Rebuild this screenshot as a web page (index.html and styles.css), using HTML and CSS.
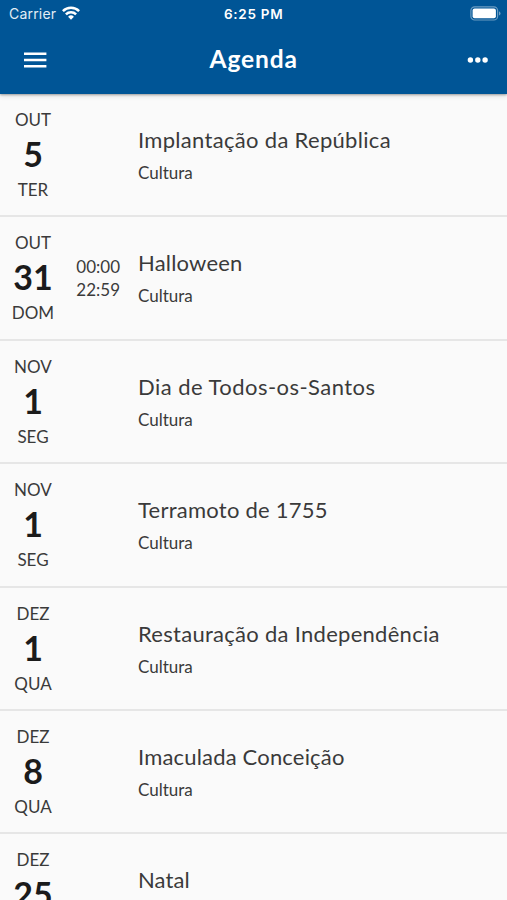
FILE: index.html
```html
<!DOCTYPE html>
<html lang="pt">
<head>
<meta charset="utf-8">
<title>Agenda</title>
<link rel="stylesheet" href="styles.css">
</head>
<body>
<header class="header">
  <div class="status">
    <div class="carrier"><span>Carrier</span>
      <svg class="wifi" viewBox="0 0 18 14" width="18" height="14"><g fill="none" stroke="#fff" stroke-width="2.5"><path d="M.9 5.1a11.5 11.5 0 0 1 16.2 0"/><path d="M3.9 8.3a7.2 7.2 0 0 1 10.2 0"/></g><path fill="#fff" d="M6.1 10.8a4.1 4.1 0 0 1 5.8 0L9 13.7z"/></svg>
    </div>
    <span class="clock">6:25 PM</span>
    <svg class="battery" viewBox="0 0 31 15" width="31" height="15"><rect x=".9" y=".8" width="26.7" height="13.2" rx="3.8" fill="none" stroke="#fff" stroke-opacity=".42" stroke-width="1.2"/><rect x="2.6" y="2.5" width="23.3" height="9.8" rx="2" fill="#fff"/><path d="M29 5.2q1.5.7 1.5 2.2T29 9.6z" fill="#fff" fill-opacity=".45"/></svg>
  </div>
  <div class="toolbar">
    <svg class="menu" viewBox="0 0 24 16" width="24" height="16" fill="#fff"><path d="M1 .4h22.4v2.5H1zM1 6.7h22.4v2.5H1zM1 12.9h22.4v2.5H1z"/></svg>
    <h1 class="heading">Agenda</h1>
    <svg class="more" viewBox="0 0 22 6" width="22" height="6" fill="#fff"><circle cx="3.4" cy="3" r="2.7"/><circle cx="10.8" cy="3" r="2.7"/><circle cx="18.1" cy="3" r="2.7"/></svg>
  </div>
</header>
<main class="list">
  <article class="event"><div class="date"><span>OUT</span><strong>5</strong><span>TER</span></div><div class="time"></div><div class="info"><h2 class="t1">Implantação da República</h2><p>Cultura</p></div></article>
  <article class="event"><div class="date"><span>OUT</span><strong>31</strong><span>DOM</span></div><div class="time"><span>00:00</span><span>22:59</span></div><div class="info"><h2 class="t2">Halloween</h2><p>Cultura</p></div></article>
  <article class="event"><div class="date"><span>NOV</span><strong>1</strong><span>SEG</span></div><div class="time"></div><div class="info"><h2 class="t3">Dia de Todos-os-Santos</h2><p>Cultura</p></div></article>
  <article class="event"><div class="date"><span>NOV</span><strong>1</strong><span>SEG</span></div><div class="time"></div><div class="info"><h2 class="t4">Terramoto de 1755</h2><p>Cultura</p></div></article>
  <article class="event"><div class="date"><span>DEZ</span><strong>1</strong><span>QUA</span></div><div class="time"></div><div class="info"><h2 class="t5">Restauração da Independência</h2><p>Cultura</p></div></article>
  <article class="event"><div class="date"><span>DEZ</span><strong>8</strong><span>QUA</span></div><div class="time"></div><div class="info"><h2 class="t6">Imaculada Conceição</h2><p>Cultura</p></div></article>
  <article class="event"><div class="date"><span>DEZ</span><strong>25</strong></div><div class="time"></div><div class="info"><h2 class="t7">Natal</h2></div></article>
</main>
</body>
</html>
```
FILE: styles.css
```css
* { box-sizing: border-box; }
body { margin: 0; height: 900px; overflow: hidden; display: flex; flex-direction: column; background: #fafafa; color: #3a3a3a; font-family: Lato, "Liberation Sans", sans-serif; }
.header { flex: none; height: 94px; background: #005596; color: #fff; box-shadow: 0 1px 2px rgba(0,0,0,.3), 0 2px 5px rgba(0,0,0,.12); z-index: 1; }
.status { height: 27px; padding: 0 6px 0 9px; display: grid; grid-template-columns: 1fr 62px 1fr; align-items: center; font-family: Inter, sans-serif; font-size: 14px; }
.carrier { display: flex; align-items: center; gap: 6px; letter-spacing: .2px; color: #e3edf5; }
.wifi { margin-top: -2px; }
.clock { font-weight: 600; font-size: 13.5px; letter-spacing: .7px; white-space: nowrap; }
.battery { justify-self: end; }
.toolbar { height: 66px; padding: 0 18px 0 23px; display: grid; grid-template-columns: 1fr 93px 1fr; align-items: center; }
.heading { margin: -2px 0 0; font-size: 24.5px; line-height: 32px; font-weight: 700; letter-spacing: .9px; }
.more { justify-self: end; }
.list { flex: 1; min-height: 0; overflow: hidden; }
.event { height: 123.4px; display: grid; grid-template-columns: 66px 54px 1fr; align-items: start; border-bottom: 2px solid #e6e6e6; }
.date { padding-top: 14px; display: flex; flex-direction: column; align-items: center; font-size: 17px; line-height: 24px; }
.date strong { margin-bottom: 3px; font-size: 34px; line-height: 43px; font-weight: 700; color: #1b1b1b; }
.time { padding-top: 38px; display: flex; flex-direction: column; align-items: flex-end; font-size: 17px; line-height: 23px; }
.info { padding: 31px 0 0 18px; }
.info h2 { margin: 0; font-size: 22px; line-height: 30px; font-weight: 400; white-space: nowrap; }
.info p { margin: 6px 0 0; font-size: 17px; line-height: 24px; }
.t1 { letter-spacing: .31px; }
.t2 { letter-spacing: .2px; }
.t3 { letter-spacing: .46px; }
.t4 { letter-spacing: .25px; }
.t5 { letter-spacing: .28px; }
.t6 { letter-spacing: .18px; }
.t7 { letter-spacing: .1px; }
```
